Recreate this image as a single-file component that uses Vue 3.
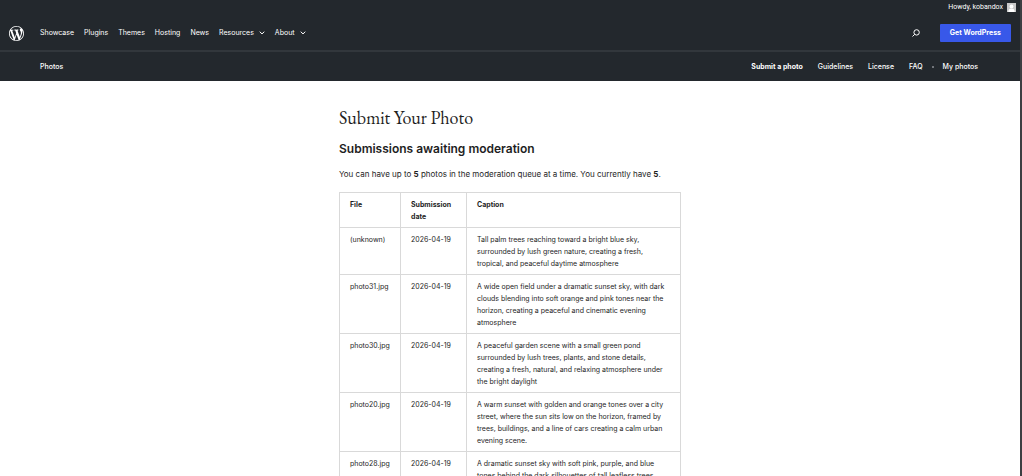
<template>
  <div class="page">
    <header class="site-header">
      <div class="admin-bar">
        <a href="#" class="account">
          <span>Howdy, kobandox</span>
          <svg class="avatar" viewBox="0 0 9 9" aria-hidden="true">
            <rect width="9" height="9" fill="#c9c9c9" />
            <circle cx="4.5" cy="3.4" r="1.9" fill="#fff" />
            <path d="M1.3 9c0-2.5 1.2-3.6 3.2-3.6S7.7 6.5 7.7 9z" fill="#fff" />
          </svg>
        </a>
      </div>
      <div class="global-nav">
        <a href="#" class="logo" aria-label="WordPress.org">
          <svg viewBox="0 0 20 20">
            <path
              fill="currentColor"
              d="M20 10c0-5.51-4.49-10-10-10C4.48 0 0 4.49 0 10c0 5.52 4.48 10 10 10 5.51 0 10-4.48 10-10zM7.78 15.37L4.37 6.22c.55-.02 1.17-.08 1.17-.08.5-.06.44-1.13-.06-1.11 0 0-1.45.11-2.37.11-.18 0-.37 0-.58-.01C4.12 2.69 6.87 1.11 10 1.11c2.33 0 4.45.87 6.05 2.34-.68-.11-1.65.39-1.65 1.58 0 .74.45 1.36.9 2.1.35.61.55 1.36.55 2.46 0 1.49-1.4 5-1.4 5l-3.03-8.37c.54-.02.82-.17.82-.17.5-.05.44-1.25-.06-1.22 0 0-1.44.12-2.38.12-.87 0-2.33-.12-2.33-.12-.5-.03-.56 1.2-.06 1.22l.92.08 1.26 3.41zM17.41 10c.24-.64.74-1.87.43-4.25.7 1.29 1.05 2.71 1.05 4.25 0 3.29-1.73 6.24-4.4 7.78.97-2.59 1.94-5.2 2.92-7.78zM6.1 18.09C3.12 16.65 1.11 13.53 1.11 10c0-1.3.23-2.48.72-3.59C3.25 10.3 4.67 14.2 6.1 18.09zm4.03-6.63l2.58 6.98c-.86.29-1.76.45-2.71.45-.79 0-1.57-.11-2.29-.33.81-2.38 1.62-4.74 2.42-7.1z"
            />
          </svg>
        </a>
        <nav class="menu">
          <template v-for="item in menuItems" :key="item.label">
            <button v-if="item.children" type="button" class="menu-item">
              {{ item.label }}
              <svg class="chevron" viewBox="0 0 6 4">
                <path d="M.7.7 3 2.9 5.3.7" fill="none" stroke="currentColor" />
              </svg>
            </button>
            <a v-else href="#" class="menu-item">{{ item.label }}</a>
          </template>
        </nav>
        <button type="button" class="search" aria-label="Search">
          <svg viewBox="0 0 8 8">
            <circle cx="4.6" cy="3.4" r="2.7" fill="none" stroke="currentColor" />
            <path d="M2.7 5.3.5 7.5" stroke="currentColor" />
          </svg>
        </button>
        <a href="#" class="get-button">Get WordPress</a>
      </div>
      <div class="local-nav">
        <a href="#" class="section-name">Photos</a>
        <nav class="local-menu">
          <a href="#" class="current">Submit a photo</a>
          <a href="#">Guidelines</a>
          <a href="#">License</a>
          <span class="faq-group">
            <a href="#">FAQ</a>
            <span class="dot"></span>
            <a href="#">My photos</a>
          </span>
        </nav>
      </div>
    </header>

    <main class="content">
      <h1>Submit Your Photo</h1>
      <h2>Submissions awaiting moderation</h2>
      <p>
        You can have up to <strong>5</strong> photos in the moderation queue at a
        time. You currently have <strong>5</strong>.
      </p>
      <table>
        <thead>
          <tr>
            <th class="col-file">File</th>
            <th class="col-date">Submission date</th>
            <th>Caption</th>
          </tr>
        </thead>
        <tbody>
          <tr v-for="photo in photos" :key="photo.file">
            <td>{{ photo.file }}</td>
            <td>{{ photo.date }}</td>
            <td>{{ photo.caption }}</td>
          </tr>
        </tbody>
      </table>
    </main>
  </div>
</template>

<script setup>
import { ref } from "vue";

const menuItems = [
  { label: "Showcase" },
  { label: "Plugins" },
  { label: "Themes" },
  { label: "Hosting" },
  { label: "News" },
  { label: "Resources", children: true },
  { label: "About", children: true },
];

const photos = ref([
  {
    file: "(unknown)",
    date: "2026-04-19",
    caption:
      "Tall palm trees reaching toward a bright blue sky, surrounded by lush green nature, creating a fresh, tropical, and peaceful daytime atmosphere",
  },
  {
    file: "photo31.jpg",
    date: "2026-04-19",
    caption:
      "A wide open field under a dramatic sunset sky, with dark clouds blending into soft orange and pink tones near the horizon, creating a peaceful and cinematic evening atmosphere",
  },
  {
    file: "photo30.jpg",
    date: "2026-04-19",
    caption:
      "A peaceful garden scene with a small green pond surrounded by lush trees, plants, and stone details, creating a fresh, natural, and relaxing atmosphere under the bright daylight",
  },
  {
    file: "photo20.jpg",
    date: "2026-04-19",
    caption:
      "A warm sunset with golden and orange tones over a city street, where the sun sits low on the horizon, framed by trees, buildings, and a line of cars creating a calm urban evening scene.",
  },
  {
    file: "photo28.jpg",
    date: "2026-04-19",
    caption:
      "A dramatic sunset sky with soft pink, purple, and blue tones behind the dark silhouettes of tall leafless trees",
  },
]);
</script>

<style>
body {
  margin: 0;
}

html {
  scrollbar-width: none;
}
</style>

<style scoped>
.page {
  box-sizing: border-box;
  min-height: 100vh;
  border-right: 2px solid #3c3f42;
  background: #fff;
  color: #1e1e1e;
  font-family: Inter, sans-serif;
  font-size: 7px;
}

a {
  color: inherit;
  text-decoration: none;
}

button {
  padding: 0;
  border: 0;
  background: none;
  color: inherit;
  font: inherit;
}

.site-header {
  background: #23282d;
  color: #fff;
  font-weight: 500;
  line-height: 12px;
}

.admin-bar {
  display: flex;
  justify-content: flex-end;
  padding: 0 4px 0 0;
  font-family: Roboto, sans-serif;
  font-weight: 400;
}

.account {
  display: flex;
  align-items: center;
  gap: 4px;
  height: 14px;
}

.avatar {
  width: 9px;
  height: 9px;
}

.global-nav {
  display: flex;
  align-items: center;
  box-sizing: border-box;
  height: 38px;
  padding: 2px 9px 0;
  border-bottom: 2px solid #32373c;
}

.logo {
  display: flex;
  margin-right: 16px;
}

.logo svg {
  width: 15px;
  height: 15px;
}

.menu {
  display: flex;
  flex: 1;
  gap: 10px;
  font-weight: 400;
}

.menu-item {
  display: flex;
  align-items: center;
  gap: 5px;
}

.chevron {
  width: 6px;
  height: 4px;
}

.search {
  display: flex;
  margin-right: 20px;
}

.search svg {
  width: 8px;
  height: 8px;
}

.get-button {
  padding: 3px 10px;
  border-radius: 1px;
  background: #3858e9;
  font-weight: 700;
}

.local-nav {
  display: flex;
  justify-content: space-between;
  align-items: center;
  height: 29px;
  padding: 0 42px 0 40px;
}

.local-menu {
  display: flex;
  align-items: center;
  gap: 15px;
}

.current {
  font-weight: 700;
}

.faq-group {
  display: flex;
  align-items: center;
  gap: 9px;
}

.dot {
  width: 2px;
  height: 2px;
  border-radius: 50%;
  background: #8c8f94;
}

.content {
  max-width: 342px;
  margin: 0 auto;
  padding-top: 24px;
}

h1 {
  margin: 0;
  font-family: "EB Garamond", "Liberation Serif", serif;
  font-size: 18px;
  font-weight: 400;
  line-height: 26px;
}

h2 {
  margin: 9px 0;
  font-size: 12px;
  font-weight: 600;
  line-height: 18px;
}

p {
  margin: 9px 0 10px;
  font-size: 8px;
  line-height: 15px;
}

table {
  width: 100%;
  border-collapse: collapse;
  table-layout: fixed;
  line-height: 12px;
}

.col-file {
  width: 61px;
}

.col-date {
  width: 66px;
}

th,
td {
  box-sizing: border-box;
  padding: 6px 10px 4px;
  border: 1px solid #d9d9d9;
  text-align: left;
  vertical-align: top;
}

th {
  font-weight: 700;
}
</style>
